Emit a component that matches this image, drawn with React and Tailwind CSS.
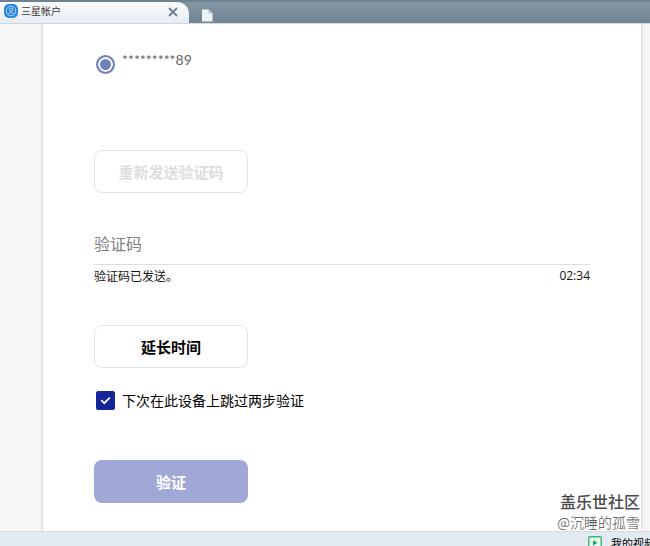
import React from 'react';

const TabBar = () => (
    <header className="flex h-6 shrink-0 items-stretch border-t-2 border-b border-t-[#6f8291] border-b-[#c9d6e0] bg-linear-to-b from-[#8497a5] to-[#708493]">
        <div className="flex w-[189px] items-start rounded-tr-xl bg-linear-to-b from-[#fafbfd] to-[#e8edf4] pt-[2px] pr-2 pl-1">
            <svg viewBox="0 0 14 14" className="h-[14px] w-[14px]" fill="none" aria-hidden="true">
                <rect width="14" height="14" rx="5" fill="#2784d8" />
                <circle cx="7" cy="7" r="4.8" stroke="#b9defa" strokeWidth="0.9" />
                <circle cx="7" cy="5.7" r="1.7" stroke="#b9defa" strokeWidth="0.9" />
                <path d="M3.9 10.3C4.5 8.2 9.5 8.2 10.1 10.3" stroke="#b9defa" strokeWidth="0.9" />
            </svg>
            <span className="ml-[3px] text-[10px] leading-[14px] text-[#3c3430]">三星帐户</span>
            <button type="button" aria-label="关闭标签页" className="ml-auto p-[3px] text-[#6c7f8e]">
                <svg viewBox="0 0 10 10" className="h-[10px] w-[10px]" aria-hidden="true">
                    <path d="M1 1L9 9M9 1L1 9" stroke="currentColor" strokeWidth="1.9" />
                </svg>
            </button>
        </div>
        <button type="button" aria-label="新标签页" className="ml-3 flex items-end">
            <svg viewBox="0 0 12 14" className="h-[14px] w-3" aria-hidden="true">
                <path d="M1 0.5H7.5L11.5 4.5V12.5H1Z" fill="#eef4f3" />
                <path d="M7.5 0.5L11.5 4.5H7.5Z" fill="#b5c9cd" />
            </svg>
        </button>
    </header>
);

const Watermark = () => (
    <div className="absolute right-[10px] bottom-[14px] text-right text-[#4a4a4a]">
        <p className="text-[16px] leading-[22px] font-medium">盖乐世社区</p>
        <p className="text-[14px] leading-5 font-light">@沉睡的孤雪</p>
    </div>
);

const VerifyForm = () => (
    <form className="flex flex-col items-start pt-[26px] pr-[51px] pb-7 pl-[51px]" onSubmit={(e) => e.preventDefault()}>
        <label className="flex items-start gap-[7px] pl-[2px] text-[#666666]">
            <input
                type="radio"
                name="phone"
                defaultChecked
                className="mt-[5px] h-[19px] w-[19px] appearance-none rounded-full border-2 border-[#7180c2] bg-[#7180c2] shadow-[inset_0_0_0_2px_white]"
            />
            <span className="font-['Lato','Noto_Sans_CJK_SC',sans-serif] text-[14px] leading-5">*********89</span>
        </label>

        <button
            type="button"
            disabled
            className="mt-[76px] h-[43px] w-[154px] rounded-lg border border-[#e4e4e4] pt-[2px] text-[15px] font-bold text-[#dddddd]"
        >
            重新发送验证码
        </button>

        <input
            type="text"
            aria-label="验证码"
            placeholder="验证码"
            className="mt-8 h-10 w-full border-b border-[#dedede] pb-1 text-[16px] text-[#333333] outline-none placeholder:text-[#808080]"
        />
        <div className="mt-px flex w-full items-center justify-between text-[12px] leading-5 text-[#111111]">
            <span>验证码已发送。</span>
            <span className="font-['Open_Sans',sans-serif]">02:34</span>
        </div>

        <button
            type="button"
            className="mt-[39px] h-[43px] w-[154px] rounded-lg border border-[#e4e4e4] pt-[2px] text-[15px] font-bold text-black"
        >
            延长时间
        </button>

        <label className="mt-[22px] flex items-center gap-[7px] pl-[2px] text-[14px] leading-5 text-black">
            <span className="grid">
                <input
                    type="checkbox"
                    defaultChecked
                    className="peer col-start-1 row-start-1 h-[19px] w-[19px] appearance-none rounded-xs border border-[#14269a] checked:bg-[#14269a]"
                />
                <svg
                    viewBox="0 0 20 20"
                    className="pointer-events-none invisible col-start-1 row-start-1 h-[19px] w-[19px] peer-checked:visible"
                    aria-hidden="true"
                >
                    <path d="M5.5 9.7L8.7 12.8L14.5 7" fill="none" stroke="white" strokeWidth="1.9" />
                </svg>
            </span>
            <span>下次在此设备上跳过两步验证</span>
        </label>

        <button type="submit" className="mt-[50px] h-[43px] w-[154px] rounded-lg bg-[#a1a8d8] pt-[2px] text-[15px] font-bold text-white">
            验证
        </button>
    </form>
);

const StatusBar = () => (
    <footer className="flex h-6 shrink-0 items-start justify-end overflow-hidden border-t border-[#d5d9de] bg-[#e4eaf2] pt-[3px]">
        <a href="#videos" className="-mr-[5px] flex items-start gap-[9px] text-[11px] leading-4 whitespace-nowrap text-black">
            <svg viewBox="0 0 14 14" className="mt-[1px] h-[14px] w-[14px]" fill="none" aria-hidden="true">
                <rect x="0.8" y="0.8" width="12.4" height="12.4" rx="1" fill="#e9faf0" stroke="#35b96d" strokeWidth="1.4" />
                <path d="M5 4.2L9.6 6.8L5 9.4Z" fill="#20a85b" />
            </svg>
            <span>我的视频</span>
        </a>
    </footer>
);

const App = () => {
    return (
        <div className="relative flex h-screen flex-col overflow-hidden bg-[#f6f6f6] font-['Noto_Sans_CJK_SC',sans-serif]">
            <TabBar />
            <main className="shrink-0 pr-2 pl-[42px]">
                <div className="border-x border-[#e2e2e2] bg-white shadow-[0_0_2px_#dddddd]">
                    <VerifyForm />
                </div>
            </main>
            <StatusBar />
            <Watermark />
        </div>
    );
};

export default App;
